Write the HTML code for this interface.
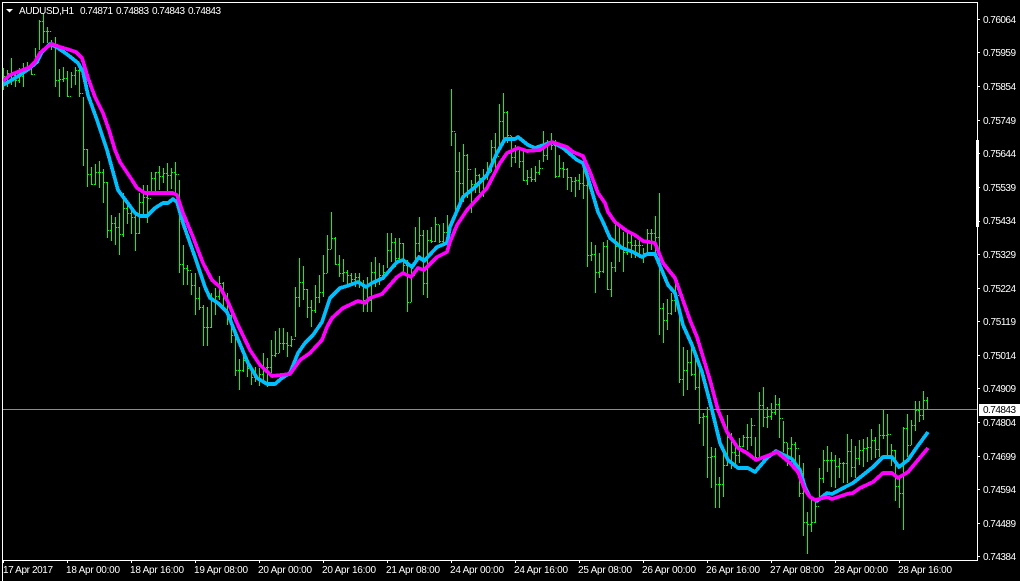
<!DOCTYPE html>
<html><head><meta charset="utf-8"><style>
html,body{margin:0;padding:0;background:#000;width:1020px;height:581px;overflow:hidden}
svg{display:block}
text{font-family:"Liberation Sans",sans-serif;font-size:10px;fill:#fff}
</style></head><body>
<svg width="1020" height="581" viewBox="0 0 1020 581" xmlns="http://www.w3.org/2000/svg">
<rect width="1020" height="581" fill="#000"/>
<path shape-rendering="crispEdges" fill="none" stroke="#00ff00" d="M3.5 68V90M7.5 70V87M11.5 58V85M15.5 73V87M19.5 68V83M23.5 63V87M27.5 62V72M31.5 63V75M35.5 48V65M39.5 20V50M43.5 13V43M47.5 27V43M51.5 40V50M55.5 37V87M59.5 69V97M63.5 67V82M67.5 71V97M71.5 72V88M75.5 67V85M79.5 67V97M83.5 97V166M87.5 149V187M91.5 167V185M95.5 164V185M99.5 161V188M103.5 169V203M107.5 182V238M111.5 215V241M115.5 217V245M119.5 213V255M123.5 193V237M127.5 202V224M131.5 207V234M135.5 213V251M139.5 193V234M143.5 185V214M147.5 185V223M151.5 172V193M155.5 172V191M159.5 166V190M163.5 168V183M167.5 163V191M171.5 168V189M175.5 162V193M179.5 180V273M183.5 245V285M187.5 265V285M191.5 273V295M195.5 273V315M199.5 287V310M203.5 305V346M207.5 307V346M211.5 293V328M215.5 288V315M219.5 276V300M223.5 282V308M227.5 293V325M231.5 307V343M235.5 330V376M239.5 359V390M243.5 355V372M247.5 360V377M251.5 370V385M255.5 367V382M259.5 368V386M263.5 353V380M267.5 358V387M271.5 340V373M275.5 331V357M279.5 328V353M283.5 328V350M287.5 332V357M291.5 336V347M295.5 287V337M299.5 258V307M303.5 266V300M307.5 289V318M311.5 300V327M315.5 285V313M319.5 275V303M323.5 255V297M327.5 235V273M331.5 212V249M335.5 237V265M339.5 255V277M343.5 259V282M347.5 270V285M351.5 273V286M355.5 273V287M359.5 273V288M363.5 280V312M367.5 277V312M371.5 262V312M375.5 257V287M379.5 263V285M383.5 265V280M387.5 233V268M391.5 233V262M395.5 238V267M399.5 238V260M403.5 243V273M407.5 260V312M411.5 265V302M415.5 227V263M419.5 217V252M423.5 230V295M427.5 230V298M431.5 227V243M435.5 217V242M439.5 225V243M443.5 223V243M447.5 215V242M451.5 89V146M455.5 133V213M459.5 152V207M463.5 144V202M467.5 154V198M471.5 180V213M475.5 168V193M479.5 174V193M483.5 169V197M487.5 162V180M491.5 140V172M495.5 133V172M499.5 104V150M503.5 93V140M507.5 111V143M511.5 136V167M515.5 145V163M519.5 147V168M523.5 148V181M527.5 170V185M531.5 168V182M535.5 166V182M539.5 160V175M543.5 131V162M547.5 140V160M551.5 133V150M555.5 140V178M559.5 155V177M563.5 162V178M567.5 168V190M571.5 177V192M575.5 177V197M579.5 174V190M583.5 160V199M587.5 165V267M591.5 242V261M595.5 245V293M599.5 253V278M603.5 242V273M607.5 240V290M611.5 262V297M615.5 223V272M619.5 227V262M623.5 232V272M627.5 233V255M631.5 232V258M635.5 240V258M639.5 240V258M643.5 248V263M647.5 229V253M651.5 229V250M655.5 216V253M659.5 193V335M663.5 303V343M667.5 299V330M671.5 293V315M675.5 280V312M679.5 310V383M683.5 347V396M687.5 350V390M691.5 347V376M695.5 358V390M699.5 368V424M703.5 413V446M707.5 407V478M711.5 447V488M715.5 448V508M719.5 477V508M723.5 450V497M727.5 415V466M731.5 433V469M735.5 442V466M739.5 438V463M743.5 435V447M747.5 424V450M751.5 418V446M755.5 437V460M759.5 392V457M763.5 387V427M767.5 407V428M771.5 403V420M775.5 395V415M779.5 398V438M783.5 421V452M787.5 443V466M791.5 437V465M795.5 442V470M799.5 455V497M803.5 463V536M807.5 512V554M811.5 500V532M815.5 502V523M819.5 468V497M823.5 450V483M827.5 446V472M831.5 452V487M835.5 455V488M839.5 458V478M843.5 462V483M847.5 434V483M851.5 439V477M855.5 446V478M859.5 440V465M863.5 439V467M867.5 437V462M871.5 429V460M875.5 437V458M879.5 424V457M883.5 409V439M887.5 414V455M891.5 444V466M895.5 450V501M899.5 477V508M903.5 427V530M907.5 414V457M911.5 420V445M915.5 401V431M919.5 401V422M923.5 391V420M927.5 397V409"/>
<path shape-rendering="crispEdges" fill="none" stroke="#00ff00" stroke-dasharray="1 1" d="M4 76.5h3M8 73.5h3M12 75.5h3M16 80.5h3M20 76.5h3M24 71.5h3M28 67.5h3M32 74.5h3M36 62.5h3M40 21.5h3M44 31.5h3M48 31.5h3M52 44.5h3M56 80.5h3M60 79.5h3M64 78.5h3M68 96.5h3M72 75.5h3M76 70.5h3M80 93.5h3M84 149.5h3M88 174.5h3M92 184.5h3M96 172.5h3M100 172.5h3M104 182.5h3M108 230.5h3M112 223.5h3M116 227.5h3M120 234.5h3M124 208.5h3M128 213.5h3M132 217.5h3M136 233.5h3M140 202.5h3M144 197.5h3M148 198.5h3M152 178.5h3M156 172.5h3M160 176.5h3M164 173.5h3M168 175.5h3M172 172.5h3M176 174.5h3M180 264.5h3M184 268.5h3M188 270.5h3M192 285.5h3M196 298.5h3M200 307.5h3M204 327.5h3M208 327.5h3M212 300.5h3M216 296.5h3M220 283.5h3M224 296.5h3M228 315.5h3M232 335.5h3M236 370.5h3M240 370.5h3M244 360.5h3M248 368.5h3M252 377.5h3M256 377.5h3M260 374.5h3M264 367.5h3M268 367.5h3M272 355.5h3M276 353.5h3M280 343.5h3M284 343.5h3M288 345.5h3M292 339.5h3M296 297.5h3M300 282.5h3M304 289.5h3M308 307.5h3M312 310.5h3M316 297.5h3M320 292.5h3M324 273.5h3M328 249.5h3M332 238.5h3M336 264.5h3M340 273.5h3M344 272.5h3M348 275.5h3M352 279.5h3M356 277.5h3M360 283.5h3M364 300.5h3M368 300.5h3M372 272.5h3M376 280.5h3M380 275.5h3M384 272.5h3M388 250.5h3M392 242.5h3M396 258.5h3M400 243.5h3M404 265.5h3M408 302.5h3M412 275.5h3M416 243.5h3M420 235.5h3M424 283.5h3M428 240.5h3M432 241.5h3M436 224.5h3M440 241.5h3M444 232.5h3M448 232.5h3M452 131.5h3M456 171.5h3M460 183.5h3M464 155.5h3M468 169.5h3M472 184.5h3M476 175.5h3M480 178.5h3M484 175.5h3M488 172.5h3M492 147.5h3M496 156.5h3M500 121.5h3M504 112.5h3M508 135.5h3M512 157.5h3M516 147.5h3M520 161.5h3M524 180.5h3M528 177.5h3M532 179.5h3M536 172.5h3M540 168.5h3M544 155.5h3M548 143.5h3M552 145.5h3M556 176.5h3M560 168.5h3M564 169.5h3M568 177.5h3M572 181.5h3M576 180.5h3M580 183.5h3M584 185.5h3M588 255.5h3M592 254.5h3M596 272.5h3M600 271.5h3M604 246.5h3M608 289.5h3M612 267.5h3M616 246.5h3M620 246.5h3M624 252.5h3M628 242.5h3M632 245.5h3M636 245.5h3M640 245.5h3M644 253.5h3M648 233.5h3M652 233.5h3M656 237.5h3M660 308.5h3M664 320.5h3M668 313.5h3M672 300.5h3M676 295.5h3M680 379.5h3M684 370.5h3M688 362.5h3M692 374.5h3M696 387.5h3M700 417.5h3M704 416.5h3M708 457.5h3M712 456.5h3M716 484.5h3M720 484.5h3M724 465.5h3M728 437.5h3M732 452.5h3M736 455.5h3M740 446.5h3M744 437.5h3M748 437.5h3M752 425.5h3M756 457.5h3M760 405.5h3M764 417.5h3M768 416.5h3M772 412.5h3M776 404.5h3M780 418.5h3M784 442.5h3M788 448.5h3M792 444.5h3M796 448.5h3M800 493.5h3M804 522.5h3M808 524.5h3M812 522.5h3M816 506.5h3M820 478.5h3M824 460.5h3M828 460.5h3M832 460.5h3M836 466.5h3M840 463.5h3M844 463.5h3M848 451.5h3M852 467.5h3M856 458.5h3M860 450.5h3M864 448.5h3M868 447.5h3M872 440.5h3M876 449.5h3M880 435.5h3M884 435.5h3M888 434.5h3M892 450.5h3M896 486.5h3M900 493.5h3M904 428.5h3M908 445.5h3M912 425.5h3M916 410.5h3M920 415.5h3M924 400.5h3"/>
<path shape-rendering="crispEdges" fill="none" stroke="#00bfff" stroke-width="3.7" stroke-linejoin="round" d="M3 85L17 77L30 68L37 62L42 52L50 44L58 48L68 55L78 63L83 72L88 95L97 120L107 150L118 190L127 202L135 213L140 216L147 216L155 208L163 203L168 203L173 199L177 202L183 223L195 257L205 287L210 298L218 303L227 312L237 337L248 363L257 378L267 384L275 384L282 378L290 373L298 353L305 343L313 335L322 322L330 298L340 288L347 286L358 282L366 287L372 283L383 278L397 262L403 260L412 267L419 257L424 261L437 247L447 243L450 227L453 220L463 197L475 187L487 175L497 153L505 139L515 139L518 137L528 145L535 148L552 142L563 148L577 160L583 163L588 178L598 212L603 222L610 238L622 248L633 252L642 257L647 254L655 254L663 273L668 285L675 293L683 325L692 345L702 372L712 410L720 443L728 460L738 468L748 468L755 472L767 458L776 451L792 459L800 470L805 487L810 497L817 501L827 493L832 494L847 486L853 483L873 467L883 457L892 457L899 467L908 460L917 447L928 432"/>
<path shape-rendering="crispEdges" fill="none" stroke="#ff00ff" stroke-width="3.7" stroke-linejoin="round" d="M3 81L10 75L20 71L30 67L35 62L40 53L47 47L52 44L60 47L70 50L76 52L82 58L88 78L95 97L103 113L109 130L115 150L120 162L132 180L137 188L145 193L153 193L173 193L177 195L183 213L193 237L203 263L212 280L220 287L228 302L237 323L250 350L260 365L272 376L290 374L300 360L310 353L322 340L327 327L332 318L343 308L358 301L365 303L370 298L382 294L397 277L403 273L411 277L418 268L424 270L437 257L447 252L450 242L457 225L467 210L487 188L500 163L507 153L518 148L527 151L540 150L552 142L567 147L573 152L583 156L590 172L598 193L605 203L608 212L615 222L627 231L635 235L643 241L655 243L663 263L675 278L690 320L697 337L710 380L718 410L727 432L738 448L747 453L756 460L767 456L777 452L790 463L798 472L805 490L810 497L815 500L827 497L832 499L847 494L853 493L860 488L873 482L883 473L892 473L898 478L908 472L928 448"/>
<path shape-rendering="crispEdges" fill="none" stroke="#8c8c8c" d="M3 409.5H977"/>
<path shape-rendering="crispEdges" fill="none" stroke="#fff" d="M2.5 581V2.5H977.5V560.5H2.5M978 19.5h2M978 52.5h2M978 86.5h2M978 120.5h2M978 153.5h2M978 187.5h2M978 221.5h2M978 254.5h2M978 288.5h2M978 321.5h2M978 355.5h2M978 388.5h2M978 422.5h2M978 456.5h2M978 489.5h2M978 523.5h2M978 556.5h2M3.5 561v2M67.5 561v2M131.5 561v2M195.5 561v2M259.5 561v2M323.5 561v2M387.5 561v2M451.5 561v2M515.5 561v2M579.5 561v2M643.5 561v2M707.5 561v2M771.5 561v2M835.5 561v2M899.5 561v2"/>
<rect x="0" y="561" width="2" height="20" fill="#000"/>
<rect x="976" y="140" width="3" height="87" fill="#fff"/>
<rect x="979" y="404" width="41" height="12" fill="#fff"/>
<path fill="#fff" d="M6 9h7l-3.5 3.5z"/>
<text x="19" y="14" textLength="55">AUDUSD,H1</text>
<text x="80" y="14" textLength="33">0.74871</text>
<text x="116" y="14" textLength="33">0.74883</text>
<text x="152" y="14" textLength="33">0.74843</text>
<text x="188" y="14" textLength="33">0.74843</text>
<text x="983" y="23" textLength="33">0.76064</text>
<text x="983" y="56" textLength="33">0.75959</text>
<text x="983" y="90" textLength="33">0.75854</text>
<text x="983" y="124" textLength="33">0.75749</text>
<text x="983" y="157" textLength="33">0.75644</text>
<text x="983" y="191" textLength="33">0.75539</text>
<text x="983" y="224" textLength="33">0.75434</text>
<text x="983" y="258" textLength="33">0.75329</text>
<text x="983" y="292" textLength="33">0.75224</text>
<text x="983" y="325" textLength="33">0.75119</text>
<text x="983" y="359" textLength="33">0.75014</text>
<text x="983" y="392" textLength="33">0.74909</text>
<text x="983" y="413" textLength="33" style="fill:#000">0.74843</text>
<text x="983" y="426" textLength="33">0.74804</text>
<text x="983" y="460" textLength="33">0.74699</text>
<text x="983" y="493" textLength="33">0.74594</text>
<text x="983" y="527" textLength="33">0.74489</text>
<text x="983" y="560" textLength="33">0.74384</text>
<text x="3" y="573" textLength="50">17 Apr 2017</text>
<text x="66" y="573" textLength="54">18 Apr 00:00</text>
<text x="130" y="573" textLength="54">18 Apr 16:00</text>
<text x="194" y="573" textLength="54">19 Apr 08:00</text>
<text x="258" y="573" textLength="54">20 Apr 00:00</text>
<text x="322" y="573" textLength="54">20 Apr 16:00</text>
<text x="386" y="573" textLength="54">21 Apr 08:00</text>
<text x="450" y="573" textLength="54">24 Apr 00:00</text>
<text x="514" y="573" textLength="54">24 Apr 16:00</text>
<text x="578" y="573" textLength="54">25 Apr 08:00</text>
<text x="642" y="573" textLength="54">26 Apr 00:00</text>
<text x="706" y="573" textLength="54">26 Apr 16:00</text>
<text x="770" y="573" textLength="54">27 Apr 08:00</text>
<text x="834" y="573" textLength="54">28 Apr 00:00</text>
<text x="898" y="573" textLength="54">28 Apr 16:00</text>
</svg>
</body></html>
